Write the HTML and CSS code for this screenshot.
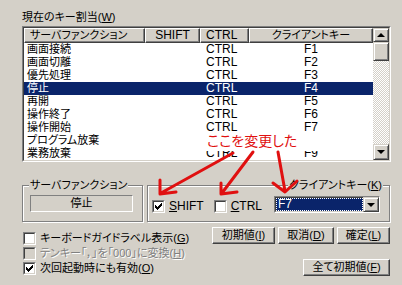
FILE: index.html
```html
<!DOCTYPE html>
<html lang="ja">
<head>
    <meta charset="UTF-8">
    <title>キー割当</title>
    <link rel="stylesheet" href="styles.css">
</head>
<body>
    <div class="dialog">
        <div class="caption">現在のキー割当(<u>W</u>)</div>

        <div class="listbox">
            <div class="list-in">
                <div class="list">
                    <div class="head">
                        <span class="hc c1 left">サーバファンクション</span>
                        <span class="hc c2 lat">SHIFT</span>
                        <span class="hc c3 left lat">CTRL</span>
                        <span class="hc c4">クライアントキー</span>
                    </div>
                    <div class="row"><span class="c1">画面接続</span><span class="c2"></span><span class="c3 lat">CTRL</span><span class="c4 lat">F1</span></div>
                    <div class="row"><span class="c1">画面切離</span><span class="c2"></span><span class="c3 lat">CTRL</span><span class="c4 lat">F2</span></div>
                    <div class="row"><span class="c1">優先処理</span><span class="c2"></span><span class="c3 lat">CTRL</span><span class="c4 lat">F3</span></div>
                    <div class="row selected"><span class="c1">停止</span><span class="c2"></span><span class="c3 lat">CTRL</span><span class="c4 lat">F4</span></div>
                    <div class="row"><span class="c1">再開</span><span class="c2"></span><span class="c3 lat">CTRL</span><span class="c4 lat">F5</span></div>
                    <div class="row"><span class="c1">操作終了</span><span class="c2"></span><span class="c3 lat">CTRL</span><span class="c4 lat">F6</span></div>
                    <div class="row"><span class="c1">操作開始</span><span class="c2"></span><span class="c3 lat">CTRL</span><span class="c4 lat">F7</span></div>
                    <div class="row"><span class="c1">プログラム放棄</span><span class="c2"></span><span class="c3 lat">CTRL</span><span class="c4 lat">F8</span></div>
                    <div class="row"><span class="c1">業務放棄</span><span class="c2"></span><span class="c3 lat">CTRL</span><span class="c4 lat">F9</span></div>
                </div>
                <div class="vscroll">
                    <div class="raised sbtn up"><i class="tri-up"></i></div>
                    <div class="raised thumb"></div>
                    <div class="track"></div>
                    <div class="raised sbtn down"><i class="tri-down"></i></div>
                </div>
            </div>
        </div>

        <div class="groups">
            <div class="group server">
                <span class="group-title">サーバファンクション</span>
                <div class="static">停止</div>
            </div>
            <div class="group client">
                <span class="group-title">クライアントキー(<u>K</u>)</span>
                <label class="check">
                    <span class="box"><span class="box-in"><svg class="mark" viewBox="0 0 7 7"><polygon points="0,2 1,2 1,3 2,3 2,4 3,4 3,3 4,3 4,2 5,2 5,1 6,1 6,0 7,0 7,3 6,3 6,4 5,4 5,5 4,5 4,6 3,6 3,7 2,7 2,6 1,6 1,5 0,5"/></svg></span></span>
                    <span class="lat"><u>S</u>HIFT</span>
                </label>
                <label class="check">
                    <span class="box"><span class="box-in"></span></span>
                    <span class="lat"><u>C</u>TRL</span>
                </label>
                <div class="combo">
                    <div class="combo-in">
                        <div class="combo-value lat"><span class="focus">F7</span></div>
                        <div class="raised combo-btn"><i class="tri-down"></i></div>
                    </div>
                </div>
            </div>
        </div>

        <div class="bottom">
            <div class="opts">
                <label class="check">
                    <span class="box"><span class="box-in"></span></span>
                    <span>キーボードガイドラベル表示(<u>G</u>)</span>
                </label>
                <label class="check disabled">
                    <span class="box"><span class="box-in"></span></span>
                    <span>テンキー「，」を「000」に変換(<u>H</u>)</span>
                </label>
                <label class="check">
                    <span class="box"><span class="box-in"><svg class="mark" viewBox="0 0 7 7"><polygon points="0,2 1,2 1,3 2,3 2,4 3,4 3,3 4,3 4,2 5,2 5,1 6,1 6,0 7,0 7,3 6,3 6,4 5,4 5,5 4,5 4,6 3,6 3,7 2,7 2,6 1,6 1,5 0,5"/></svg></span></span>
                    <span>次回起動時にも有効(<u>O</u>)</span>
                </label>
            </div>
            <div class="btns">
                <div class="btn-row">
                    <button class="btn w-init">初期値(<u>I</u>)</button>
                    <button class="btn w-cancel">取消(<u>D</u>)</button>
                    <button class="btn w-ok">確定(<u>L</u>)</button>
                </div>
                <button class="btn w-all">全て初期値(<u>F</u>)</button>
            </div>
        </div>
    </div>

    <!-- hand-drawn annotation on top of the screenshot -->
    <div class="note">ここを変更した</div>
    <svg class="marks" width="402" height="285" viewBox="0 0 402 285">
        <g fill="none" stroke="#e01010" stroke-width="3" stroke-linecap="round" stroke-linejoin="round">
            <path d="M233 153 L161 193 M160 180 L160 194 L176 192"/>
            <path d="M253 152 L222 193 M221 183 L221 194 L237 192"/>
            <path d="M278 152 L285 191 M273 183 L285 192 L297 181"/>
        </g>
    </svg>
</body>
</html>
```

FILE: styles.css
```css
:root {
    --face: #d4d0c8;
    --shadow: #808080;
    --dark: #404040;
    --hilite: #ffffff;
    --select: #0a246a;
}

* {
    margin: 0;
    padding: 0;
    box-sizing: border-box;
}

body {
    position: relative;
    width: 402px;
    height: 285px;
    overflow: hidden;
    background: var(--face);
    color: #000;
    font-family: "Liberation Sans", "Noto Sans CJK JP", sans-serif;
    font-size: 11px;
    line-height: 13px;
    font-feature-settings: "palt";
}

.lat {
    font-size: 12px;
}

u {
    text-decoration-thickness: 1px;
    text-underline-offset: 1px;
}

.dialog {
    padding: 11px 11px 0 22px;
}

.caption {
    margin-bottom: 2px;
}

/* list view */

.listbox {
    width: 369px;
    border: 1px solid;
    border-color: var(--shadow) var(--hilite) var(--hilite) var(--shadow);
}

.list-in {
    display: flex;
    height: 134px;
    background: #fff;
    border: 1px solid;
    border-color: var(--dark) var(--face) var(--face) var(--dark);
}

.list {
    flex: 1;
    overflow: hidden;
}

.head,
.row {
    display: grid;
    grid-template-columns: 121px 55px 49px 1fr;
}

.head {
    height: 15px;
}

.hc {
    text-align: center;
    background: var(--face);
    border: 1px solid;
    border-color: var(--hilite) var(--dark) var(--dark) var(--hilite);
    box-shadow: inset -1px -1px 0 var(--shadow);
    line-height: 12px;
    white-space: nowrap;
}

.hc.left {
    text-align: left;
    padding-left: 5px;
}

.row {
    height: 13px;
    white-space: nowrap;
}

.row .c1 {
    padding-left: 3px;
}

.row .c3 {
    padding-left: 6px;
}

.row .c4 {
    text-align: center;
}

.row.selected {
    background: var(--select);
    color: #fff;
}

/* scrollbar */

.vscroll {
    width: 16px;
    display: flex;
    flex-direction: column;
    background: repeating-conic-gradient(#fff 0 25%, var(--face) 0 50%) 0 0 / 2px 2px;
}

.raised {
    background: var(--face);
    border: 1px solid;
    border-color: var(--face) var(--dark) var(--dark) var(--face);
    box-shadow: inset 1px 1px 0 var(--hilite), inset -1px -1px 0 var(--shadow);
}

.sbtn {
    display: flex;
    align-items: center;
    justify-content: center;
}

.sbtn.up {
    height: 14px;
}

.sbtn.down {
    height: 16px;
}

.thumb {
    height: 19px;
}

.track {
    flex: 1;
}

.tri-up,
.tri-down {
    width: 0;
    height: 0;
    border-left: 4px solid transparent;
    border-right: 4px solid transparent;
}

.tri-up {
    border-bottom: 4px solid #000;
}

.tri-down {
    border-top: 4px solid #000;
}

/* group boxes */

.groups {
    display: flex;
    gap: 4px;
    margin-top: 23px;
}

.group {
    position: relative;
    height: 37px;
    border: 1px solid var(--shadow);
    box-shadow: inset 1px 1px 0 var(--hilite), 1px 1px 0 var(--hilite);
    padding-top: 9px;
}

.group-title {
    position: absolute;
    top: -7px;
    padding: 0 1px;
    background: var(--face);
    white-space: nowrap;
}

.server {
    width: 121px;
    padding-left: 7px;
}

.server .group-title {
    left: 6px;
}

.static {
    width: 103px;
    height: 17px;
    text-align: center;
    line-height: 15px;
    border: 1px solid;
    border-color: var(--shadow) var(--hilite) var(--hilite) var(--shadow);
}

.client {
    width: 243px;
    display: flex;
    align-items: flex-end;
    padding-left: 4px;
    padding-bottom: 8px;
}

.client .group-title {
    right: 6px;
}

.client .check {
    margin-right: 10px;
}

.client .check + .check {
    margin-right: 12px;
}

/* checkboxes */

.check {
    display: flex;
    align-items: center;
    gap: 4px;
    height: 13px;
    white-space: nowrap;
}

.box {
    width: 13px;
    height: 13px;
    border: 1px solid;
    border-color: var(--shadow) var(--hilite) var(--hilite) var(--shadow);
}

.box-in {
    display: block;
    width: 11px;
    height: 11px;
    padding: 1px;
    background: #fff;
    border: 1px solid;
    border-color: var(--dark) var(--face) var(--face) var(--dark);
}

.mark {
    display: block;
    width: 7px;
    height: 7px;
    fill: #000;
    shape-rendering: crispEdges;
}

.check.disabled {
    color: var(--shadow);
    text-shadow: 1px 1px 0 var(--hilite);
}

.check.disabled .box-in {
    background: var(--face);
}

/* combo */

.combo {
    width: 106px;
    height: 17px;
    border: 1px solid;
    border-color: var(--shadow) var(--hilite) var(--hilite) var(--shadow);
}

.combo-in {
    display: flex;
    height: 15px;
    background: #fff;
    border: 1px solid;
    border-color: var(--dark) var(--face) var(--face) var(--dark);
}

.combo-value {
    flex: 1;
    background: var(--select);
    color: #fff;
    padding: 0 2px;
    outline: 1px dotted #fff;
    outline-offset: -1px;
    line-height: 13px;
}

.combo-btn {
    width: 16px;
    margin: -1px -1px -1px 0;
    display: flex;
    align-items: center;
    justify-content: center;
}

/* bottom row */

.bottom {
    display: flex;
    justify-content: space-between;
    margin-top: 5px;
    padding-left: 1px;
}

.opts {
    display: flex;
    flex-direction: column;
    gap: 2px;
    padding-top: 5px;
}

.btns {
    display: flex;
    flex-direction: column;
    align-items: flex-end;
    gap: 15px;
    margin-right: 1px;
}

.btn-row {
    display: flex;
    gap: 3px;
}

.btn {
    height: 17px;
    font: inherit;
    color: #000;
    background: var(--face);
    border: 1px solid;
    border-color: var(--hilite) var(--dark) var(--dark) var(--hilite);
    box-shadow: inset -1px -1px 0 var(--shadow);
    white-space: nowrap;
}

.w-init { width: 63px; }
.w-cancel { width: 56px; }
.w-ok { width: 53px; }
.w-all { width: 87px; }

/* annotation */

.note {
    position: absolute;
    left: 205px;
    top: 131px;
    width: 130px;
    height: 20px;
    padding: 1px 0 0 2px;
    background: #fff;
    color: #e01010;
    font-family: "Noto Sans CJK JP", sans-serif;
    font-size: 14px;
    line-height: 16px;
}

.marks {
    position: absolute;
    left: 0;
    top: 0;
    pointer-events: none;
}
```
